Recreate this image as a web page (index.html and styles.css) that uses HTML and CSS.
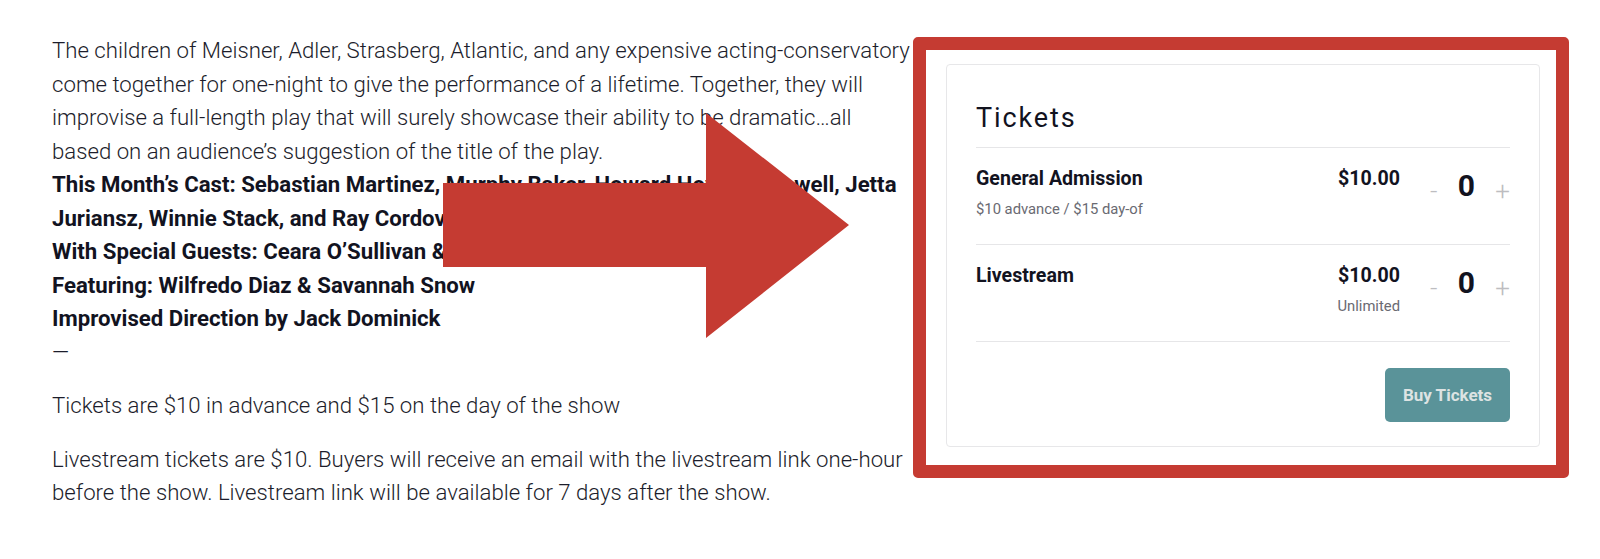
FILE: index.html
```html
<!DOCTYPE html>
<html lang="en">
<head>
<meta charset="utf-8">
<title>Tickets</title>
<link rel="stylesheet" href="styles.css">
</head>
<body>
<div class="page">
  <div class="desc">
    <p>The children of Meisner, Adler, Strasberg, Atlantic, and any expensive acting-conservatory<br>come together for one-night to give the performance of a lifetime. Together, they will<br>improvise a full-length play that will surely showcase their ability to be dramatic…all<br>based on an audience’s suggestion of the title of the play.<br><strong>This Month’s Cast: Sebastian Martinez, Murphy Baker, Howard Howe, Li Powell, Jetta<br>Juriansz, Winnie Stack, and Ray Cordova</strong><br><strong>With Special Guests: Ceara O’Sullivan &amp; Kyle Reed</strong><br><strong>Featuring: Wilfredo Diaz &amp; Savannah Snow</strong><br><strong>Improvised Direction by Jack Dominick</strong><br>—</p>
    <p>Tickets are $10 in advance and $15 on the day of the show</p>
    <p>Livestream tickets are $10. Buyers will receive an email with the livestream link one-hour<br>before the show. Livestream link will be available for 7 days after the show.</p>
  </div>
  <div class="highlight">
    <section class="card">
      <h2 class="card-title">Tickets</h2>
      <div class="row">
        <div class="info">
          <div class="name">General Admission</div>
          <div class="sub">$10 advance / $15 day-of</div>
        </div>
        <div class="price">
          <div class="amount">$10.00</div>
        </div>
        <div class="qty"><span class="step">-</span><span class="count">0</span><span class="step">+</span></div>
      </div>
      <div class="row">
        <div class="info">
          <div class="name">Livestream</div>
        </div>
        <div class="price">
          <div class="amount">$10.00</div>
          <div class="sub">Unlimited</div>
        </div>
        <div class="qty"><span class="step">-</span><span class="count">0</span><span class="step">+</span></div>
      </div>
      <div class="actions"><button class="buy" type="button">Buy Tickets</button></div>
    </section>
  </div>
  <svg class="arrow" width="407" height="226" viewBox="0 0 407 226" aria-hidden="true"><polygon points="0,70 263,70 263,0 406,112 263,225 263,154 0,154" fill="#c53b32"/></svg>
</div>
</body>
</html>
```

FILE: styles.css
```css
html, body {
  margin: 0;
  background: #fff;
}
body {
  font-family: Roboto, "Liberation Sans", sans-serif;
  color: #1c1d2b;
}
.page {
  position: relative;
  display: flex;
  align-items: flex-start;
  padding-left: 52px;
  height: 559px;
  box-sizing: border-box;
}
.desc {
  flex: none;
  width: 861px;
  padding-top: 34px;
  font-size: 22.2px;
  line-height: 33.5px;
  font-weight: 300;
  white-space: nowrap;
}
.desc p {
  margin: 0 0 20px;
}
.desc strong {
  font-weight: 700;
  color: #12131f;
}
.highlight {
  flex: none;
  margin-top: 37px;
  width: 656px;
  box-sizing: border-box;
  border: 13px solid #c53b32;
  border-radius: 5px;
  padding: 14px 16px 18px 20px;
}
.card {
  border: 1px solid #e7e7e9;
  border-radius: 4px;
  padding: 0 29px 24px;
}
.card-title {
  margin: 0;
  padding: 37px 0 13px;
  font-size: 27px;
  line-height: 32px;
  font-weight: 400;
  letter-spacing: 1.9px;
  color: #12131f;
  border-bottom: 1px solid #e6e6e8;
}
.row {
  display: flex;
  align-items: flex-start;
  height: 97px;
  box-sizing: border-box;
  padding-top: 19px;
  border-bottom: 1px solid #e6e6e8;
}
.info {
  flex: 1;
}
.name, .amount {
  font-size: 19.6px;
  line-height: 24px;
  font-weight: 700;
  color: #12131f;
}
.sub {
  margin-top: 8px;
  font-size: 14.8px;
  line-height: 20px;
  color: #6a6a72;
}
.price {
  text-align: right;
}
.qty {
  display: flex;
  align-items: flex-start;
  justify-content: space-between;
  margin-left: 30px;
  margin-top: 4px;
  width: 80px;
}
.count {
  font-size: 30px;
  line-height: 30px;
  font-weight: 700;
  color: #12131f;
}
.step {
  font-size: 26px;
  line-height: 30px;
  font-weight: 300;
  color: #bdbdc0;
  margin-top: 5px;
}
.actions {
  display: flex;
  justify-content: flex-end;
  padding-top: 26px;
}
.buy {
  width: 125px;
  height: 54px;
  border: 0;
  border-radius: 5px;
  background: #5a9399;
  color: #dde3e3;
  font-family: inherit;
  font-size: 17px;
  font-weight: 700;
  padding: 0;
}
.arrow {
  position: absolute;
  left: 443px;
  top: 113px;
}
```
